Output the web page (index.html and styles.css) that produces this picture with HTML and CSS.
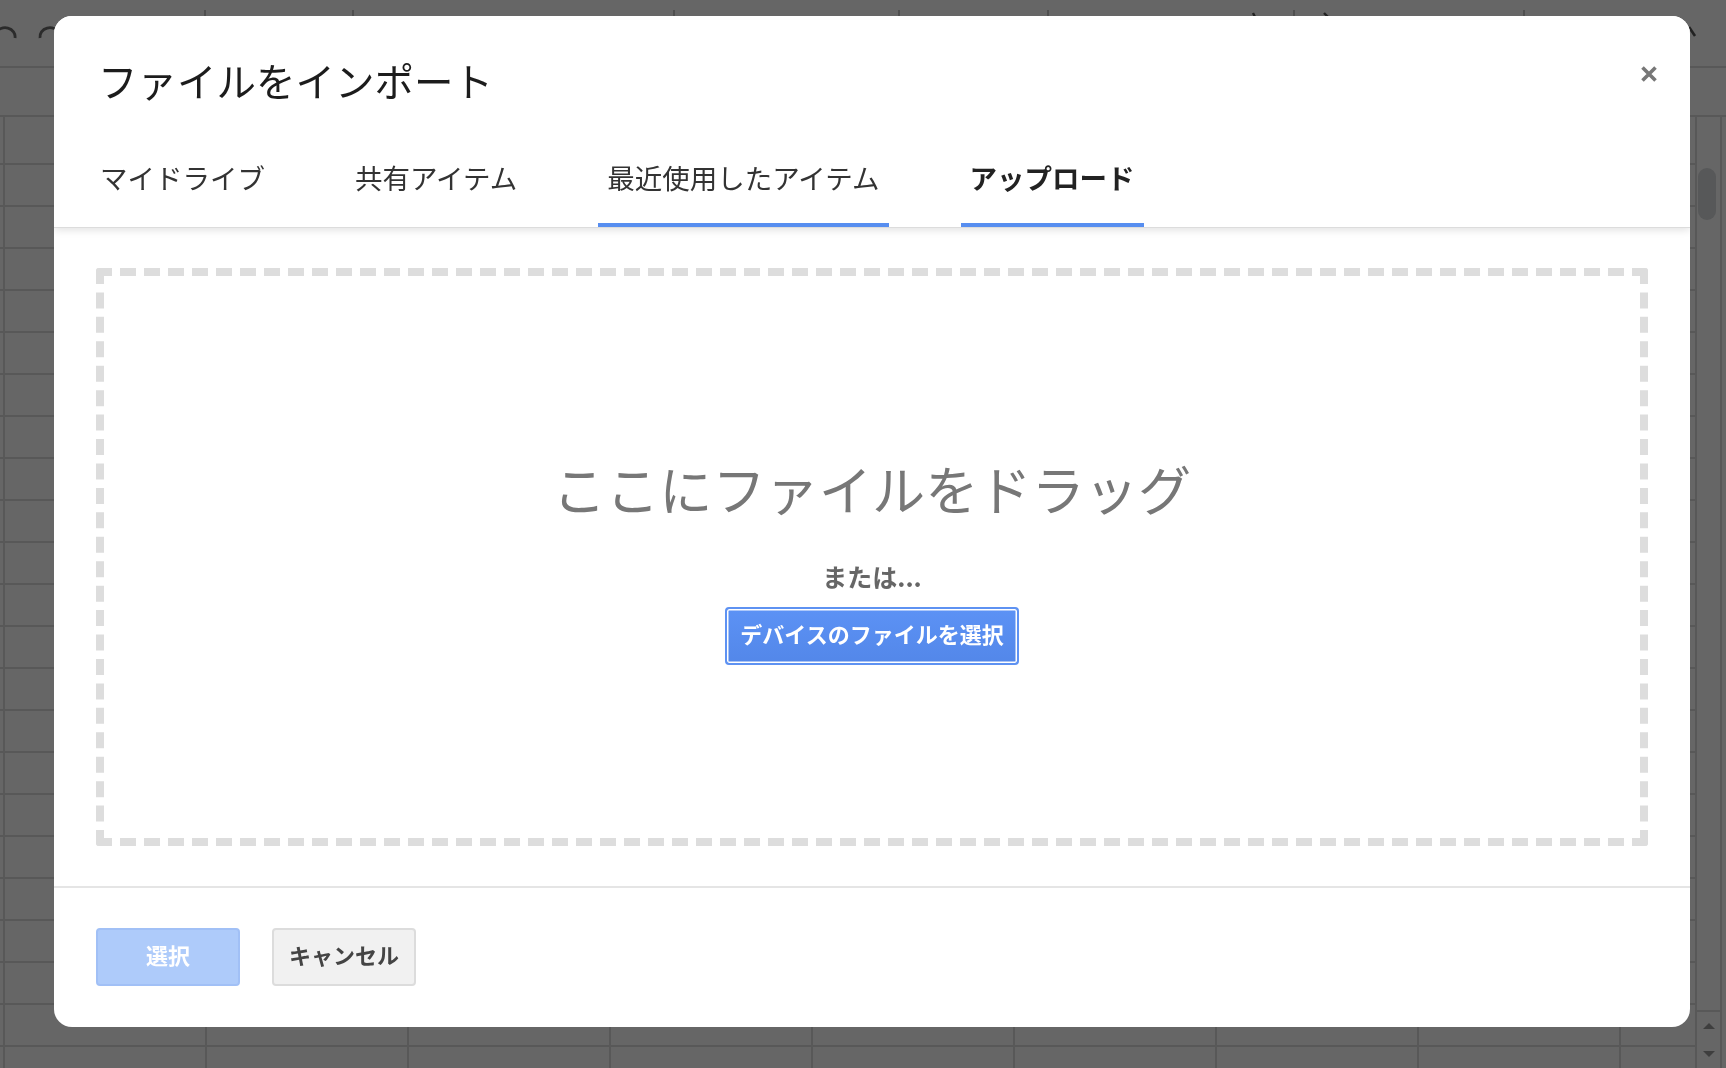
FILE: index.html
```html
<!DOCTYPE html>
<html lang="ja">
<head>
<meta charset="utf-8">
<title>ファイルをインポート</title>
<link rel="stylesheet" href="styles.css">
</head>
<body>
  <div class="sheet-top">
    <svg class="toolbar-art" width="1726" height="68" viewBox="0 0 1726 68" aria-hidden="true">
      <path d="M-4 33 A 10 9 0 0 1 15 38" fill="none" stroke="#2b2b2b" stroke-width="2.8"/>
      <path d="M40 38 A 10 9 0 0 1 59 33" fill="none" stroke="#2b2b2b" stroke-width="2.8"/>
      <g fill="#4f4f4f">
        <rect x="204" y="10" width="2" height="8"/>
        <rect x="352" y="10" width="2" height="8"/>
        <rect x="673" y="10" width="2" height="8"/>
        <rect x="898" y="10" width="2" height="8"/>
        <rect x="1047" y="10" width="2" height="8"/>
        <rect x="1293" y="10" width="2" height="8"/>
        <rect x="1523" y="10" width="2" height="8"/>
      </g>
      <path d="M1253 13 l2 4" stroke="#222" stroke-width="2.4"/>
      <path d="M1324 13 l5 5" stroke="#222" stroke-width="2.4"/>
      <path d="M1689 27 l6 9" stroke="#222" stroke-width="2.6"/>
    </svg>
  </div>
  <div class="sheet-formula"></div>
  <div class="sheet-main">
    <div class="sheet-cells">
      <div class="col-head"></div>
      <div class="cells"></div>
    </div>
    <div class="vscroll">
      <div class="vscroll-track">
        <div class="vscroll-thumb"></div>
      </div>
      <div class="vscroll-arrows">
        <span class="arrow-up"></span>
        <span class="arrow-down"></span>
      </div>
    </div>
  </div>

  <div class="dialog" role="dialog" aria-label="ファイルをインポート">
    <header class="dlg-head">
      <div class="title-row">
        <h1 class="title">ファイルをインポート</h1>
        <button class="close" aria-label="閉じる">
          <svg width="18" height="18" viewBox="0 0 18 18"><path d="M2.5 2.5 L15.5 15.5 M15.5 2.5 L2.5 15.5" stroke="#777" stroke-width="3.6" stroke-linecap="butt" fill="none"/></svg>
        </button>
      </div>
      <nav class="tabs">
        <span class="tab">マイドライブ</span>
        <span class="tab">共有アイテム</span>
        <span class="tab tab-line">最近使用したアイテム</span>
        <span class="tab tab-line tab-active">アップロード</span>
      </nav>
    </header>
    <main class="dlg-body">
      <div class="dropzone">
        <div class="drop-title">ここにファイルをドラッグ</div>
        <div class="drop-or">または...</div>
        <button class="pick">デバイスのファイルを選択</button>
      </div>
    </main>
    <footer class="dlg-foot">
      <button class="btn btn-primary" disabled>選択</button>
      <button class="btn btn-cancel">キャンセル</button>
    </footer>
  </div>
</body>
</html>
```

FILE: styles.css
```css
html, body {
  margin: 0;
  padding: 0;
}
body {
  width: 1726px;
  height: 1068px;
  overflow: hidden;
  background: #666666;
  display: flex;
  flex-direction: column;
  font-family: "Noto Sans CJK JP", "Noto Sans", sans-serif;
}

/* ---------- spreadsheet behind the overlay ---------- */
.sheet-top {
  height: 66px;
  border-bottom: 2px solid #585858;
  overflow: hidden;
}
.toolbar-art {
  display: block;
}
.sheet-formula {
  height: 47px;
  border-bottom: 2px solid #585858;
}
.sheet-main {
  flex: 1;
  display: flex;
}
.sheet-cells {
  flex: 1;
  display: flex;
  flex-direction: column;
  background-image: linear-gradient(to right, #585858 2px, transparent 2px);
  background-size: 202px 100%;
  background-position: 3px 0;
}
.col-head {
  height: 46px;
  border-bottom: 2px solid #585858;
}
.cells {
  flex: 1;
  background-image: linear-gradient(to bottom, transparent 40px, #585858 40px, #585858 42px);
  background-size: 100% 42px;
}
.vscroll {
  width: 23px;
  border-left: 2px solid #585858;
  border-right: 2px solid #585858;
  margin-right: 4px;
  display: flex;
  flex-direction: column;
}
.vscroll-track {
  flex: 1;
  padding: 51px 2px 0 1px;
}
.vscroll-thumb {
  width: 18px;
  height: 52px;
  border-radius: 9px;
  background: #575859;
}
.vscroll-arrows {
  height: 56px;
  display: flex;
  flex-direction: column;
  align-items: center;
  justify-content: space-around;
  border-top: 2px solid #585858;
}
.arrow-up, .arrow-down {
  width: 0;
  height: 0;
  border-left: 6px solid transparent;
  border-right: 6px solid transparent;
}
.arrow-up { border-bottom: 6px solid #3e3e3e; }
.arrow-down { border-top: 6px solid #3e3e3e; }

/* ---------- dialog (overlay) ---------- */
.dialog {
  position: fixed;
  left: 54px;
  top: 16px;
  width: 1636px;
  height: 1011px;
  background: #ffffff;
  border-radius: 18px;
  display: flex;
  flex-direction: column;
  overflow: hidden;
}

.dlg-head {
  position: relative;
  z-index: 1;
  background: #fff;
  box-shadow: 0 1px 0 #dcdcdc, 0 3px 8px rgba(0, 0, 0, 0.12);
}
.title-row {
  display: flex;
  justify-content: space-between;
  align-items: flex-start;
  padding: 44px 32px 0 44px;
}
.title {
  margin: 0;
  font-size: 39.5px;
  line-height: 39.5px;
  font-weight: 400;
  color: #1c1c1c;
}
.close {
  margin-top: 5px;
  width: 18px;
  height: 18px;
  padding: 0;
  border: 0;
  background: none;
  display: block;
}
.close svg {
  display: block;
}

.tabs {
  display: flex;
  gap: 72px;
  padding-left: 37px;
  margin-top: 64.5px;
}
.tab {
  font-size: 27.5px;
  line-height: 27.5px;
  padding: 0 9px 31px;
  border-bottom: 4px solid transparent;
  color: #333;
  white-space: nowrap;
}
.tab-line {
  border-bottom-color: #578ef0;
}
.tab-active {
  font-weight: 700;
  color: #222;
}

.dlg-body {
  flex: 1;
  display: flex;
  padding: 41.5px 42px 40px;
}
.dropzone {
  flex: 1;
  border: 8px dashed #dddddd;
  border-radius: 3px;
  display: flex;
  flex-direction: column;
  align-items: center;
  justify-content: center;
  padding-top: 12px;
}
.drop-title {
  font-size: 53.2px;
  line-height: 53px;
  color: #777;
  white-space: nowrap;
}
.drop-or {
  margin-top: 50px;
  font-size: 25px;
  line-height: 25px;
  font-weight: 700;
  color: #666;
}
.pick {
  margin-top: 18px;
  height: 58px;
  padding: 0 13px 6px;
  border: 2px solid #5e92f2;
  border-radius: 4px;
  box-shadow: inset 0 0 0 1.5px #ffffff;
  background: linear-gradient(#5c92f5, #5387e9);
  color: #fff;
  font-family: inherit;
  font-size: 22px;
  font-weight: 700;
  line-height: 22px;
  white-space: nowrap;
}

.dlg-foot {
  border-top: 2px solid #e5e5e5;
  padding: 40px 42px 41px;
  display: flex;
  gap: 32px;
}
.btn {
  width: 144px;
  height: 58px;
  border-radius: 4px;
  font-family: inherit;
  font-size: 22px;
  font-weight: 700;
  line-height: 22px;
  padding: 0 0 7px;
}
.btn-primary {
  background: #aecbfa;
  border: 2px solid #a1c0f6;
  color: #ffffff;
}
.btn-cancel {
  background: #f1f1f1;
  border: 2px solid #dcdcdc;
  color: #444;
}
```
